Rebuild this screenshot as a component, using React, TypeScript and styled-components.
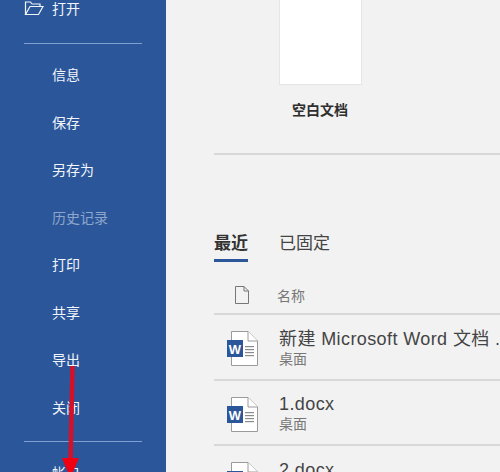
import styled, { createGlobalStyle } from "styled-components";

const GlobalStyle = createGlobalStyle`
  html, body {
    margin: 0;
    padding: 0;
    background: #f2f2f2;
  }
  body {
    font-family: "Liberation Sans", "Noto Sans CJK SC", sans-serif;
  }
`;

const Page = styled.div`
  position: relative;
  display: flex;
  width: 500px;
  height: 472px;
  overflow: hidden;
`;

const Sidebar = styled.nav`
  flex: none;
  box-sizing: border-box;
  width: 166px;
  height: 472px;
  padding: 0 24px;
  overflow: hidden;
  background: #2b579a;
`;

const OpenRow = styled.div`
  display: flex;
  align-items: center;
  gap: 8px;
  height: 16px;
  margin-bottom: 27px;
  color: #f2f5fa;
  font-size: 14px;
`;

const MenuItem = styled.div<{ $muted?: boolean }>`
  display: flex;
  align-items: center;
  height: 47.5px;
  padding-left: 28px;
  color: ${(p) => (p.$muted ? "#8ea6cb" : "#f2f5fa")};
  font-size: 14px;
`;

const SideRule = styled.hr`
  height: 1px;
  margin: 0;
  border: 0;
  background: #7f9fd0;
`;

const MenuGroup = styled.div`
  padding: 6.5px 0 10.5px;
`;

const Main = styled.main`
  flex: 1;
  min-width: 0;
  padding-left: 48px;
  background: #f2f2f2;
  color: #333;
`;

const BlankDoc = styled.div`
  display: flex;
  flex-direction: column;
  align-items: center;
  width: 212px;
  margin-bottom: 34px;
`;

const BlankSheet = styled.div`
  box-sizing: border-box;
  width: 83px;
  height: 85px;
  background: #fff;
  border: 1px solid #e6e6e6;
  border-top: 0;
`;

const BlankLabel = styled.div`
  margin-top: 16px;
  color: #2f2f2f;
  font-size: 14px;
  font-weight: 700;
  line-height: 18px;
`;

const Rule = styled.hr`
  height: 2px;
  margin: 0;
  border: 0;
  background: #d8d8d8;
`;

const Tabs = styled.div`
  display: flex;
  gap: 31px;
  margin-top: 77px;
`;

const Tab = styled.div<{ $active?: boolean }>`
  box-sizing: border-box;
  height: 30px;
  border-bottom: 3px solid ${(p) => (p.$active ? "#2b579a" : "transparent")};
  color: ${(p) => (p.$active ? "#333" : "#444")};
  font-size: 17px;
  font-weight: ${(p) => (p.$active ? 700 : 400)};
  line-height: 24px;
`;

const ListHeader = styled.div`
  box-sizing: border-box;
  display: flex;
  align-items: center;
  gap: 28px;
  height: 51px;
  padding: 15px 0 0 21px;
  color: #777;
  font-size: 14px;
`;

const FileRow = styled.div`
  display: flex;
  align-items: center;
  gap: 21px;
  height: 63.5px;
  padding-left: 13px;
`;

const FileText = styled.div`
  min-width: 0;
  margin-top: 2px;
  white-space: nowrap;
`;

const FileName = styled.div`
  color: #444;
  font-size: 18px;
  letter-spacing: 0.4px;
  line-height: 22px;
`;

const FileLocation = styled.div`
  color: #777;
  font-size: 14px;
  line-height: 18px;
`;

const Arrow = styled.svg`
  position: absolute;
  left: 58px;
  top: 362px;
`;

const IconSvg = styled.svg`
  flex: none;
`;

const WordSvg = styled(IconSvg)`
  margin-top: 4px;
`;

function FolderIcon() {
  return (
    <IconSvg width="20" height="16" viewBox="0 0 20 16" fill="none" stroke="#f2f5fa" strokeWidth="1.2">
      <path d="M1.500 14.500V2h5l1.500 2H16v2.500" />
      <path d="M1.500 14.500h13L19 6.500H6z" />
    </IconSvg>
  );
}

function PlainFileIcon() {
  return (
    <IconSvg width="14" height="18" viewBox="0 0 14 18" fill="none" stroke="#777" strokeWidth="1">
      <path d="M.5.5h8.500l4.500 4.500v12.500H.5z" />
      <path d="M9 .5V5h4.500" />
    </IconSvg>
  );
}

function WordIcon() {
  return (
    <WordSvg width="31" height="35" viewBox="0 0 31 35">
      <path d="M4.500.500H21l9.500 9.500v24.500H4.500z" fill="#fff" stroke="#9a9a9a" />
      <path d="M21 .500V10h9.500" fill="#fff" stroke="#9a9a9a" />
      <rect x="18" y="15" width="9" height="1.200" fill="#8b8b8b" />
      <rect x="18" y="18" width="9" height="1.200" fill="#8b8b8b" />
      <rect x="18" y="21" width="9" height="1.200" fill="#8b8b8b" />
      <rect x="18" y="24" width="9" height="1.200" fill="#8b8b8b" />
      <rect x="0" y="9" width="16" height="17" fill="#2b579a" />
      <text x="8" y="22.500" textAnchor="middle" fontSize="13" fontWeight="700" fill="#fff" fontFamily="Liberation Sans, sans-serif">W</text>
    </WordSvg>
  );
}

const menu: { label: string; muted?: boolean }[] = [
  { label: "信息" },
  { label: "保存" },
  { label: "另存为" },
  { label: "历史记录", muted: true },
  { label: "打印" },
  { label: "共享" },
  { label: "导出" },
  { label: "关闭" },
];

const files = ["新建 Microsoft Word 文档 .docx", "1.docx", "2.docx"];

export default function App() {
  return (
    <Page>
      <GlobalStyle />
      <Sidebar>
        <OpenRow>
          <FolderIcon />
          打开
        </OpenRow>
        <SideRule />
        <MenuGroup>
          {menu.map((m) => (
            <MenuItem key={m.label} $muted={m.muted}>
              {m.label}
            </MenuItem>
          ))}
        </MenuGroup>
        <SideRule />
        <MenuGroup>
          <MenuItem>帐户</MenuItem>
        </MenuGroup>
      </Sidebar>
      <Main>
        <BlankDoc>
          <BlankSheet />
          <BlankLabel>空白文档</BlankLabel>
        </BlankDoc>
        <Rule />
        <Tabs>
          <Tab $active>最近</Tab>
          <Tab>已固定</Tab>
        </Tabs>
        <ListHeader>
          <PlainFileIcon />
          名称
        </ListHeader>
        {files.map((name) => (
          <div key={name}>
            <Rule />
            <FileRow>
              <WordIcon />
              <FileText>
                <FileName>{name}</FileName>
                <FileLocation>桌面</FileLocation>
              </FileText>
            </FileRow>
          </div>
        ))}
      </Main>
      <Arrow width="26" height="120" viewBox="0 0 26 120">
        <path d="M14.500 4 L12.500 100" stroke="#d4102a" strokeWidth="4.500" fill="none" />
        <path d="M4 96 H21 L12.500 116z" fill="#f00010" />
      </Arrow>
    </Page>
  );
}
